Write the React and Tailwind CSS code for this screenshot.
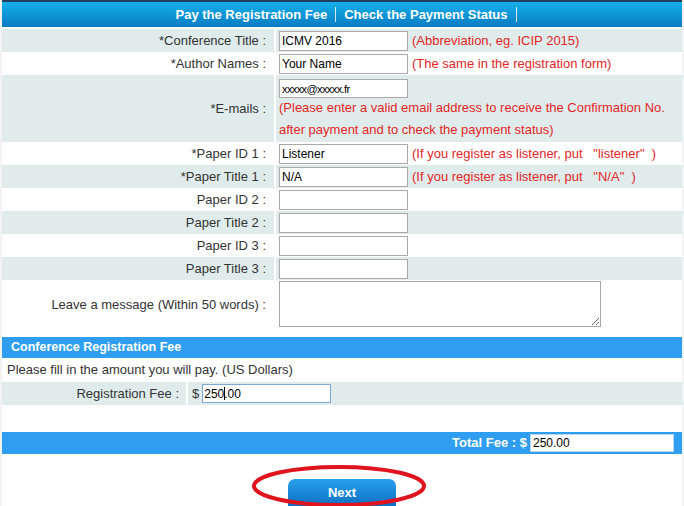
const font = "font-['Liberation_Sans',Arial,sans-serif]";

function Field({ value = "", w = "w-[129px]" }) {
  return (
    <input
      readOnly
      value={value}
      className={`${w} h-[20px] border border-[#a9a9a9] bg-white px-[2px] text-[12px] text-black outline-none`}
    />
  );
}

function Row({ label, shade, h = "h-[23px]", children }) {
  const bg = shade ? "bg-[#e0ecec]" : "bg-white";
  return (
    <div className={`flex ${h} gap-[2px]`}>
      <div className={`${bg} w-[272px] shrink-0 flex items-center justify-end pr-[8px] text-[13px] text-[#333]`}>
        {label}
      </div>
      <div className={`${bg} flex-1 flex items-center pl-[3px]`}>{children}</div>
    </div>
  );
}

function Hint({ children }) {
  return <span className="ml-[4px] text-[13px] text-[#e3261f] whitespace-pre">{children}</span>;
}

export default function App() {
  return (
    <div className={`${font} w-[684px] h-[506px] overflow-hidden bg-[#f3f3f3]`}>
      <div className="mx-[2px] h-full bg-white">
        {/* top strip + nav bar */}
        <div className="h-[2px] bg-[#243f5c]" />
        <div className="h-[25px] bg-gradient-to-b from-[#17b0ea] to-[#0a7bc3] flex items-center justify-center pl-[8px] text-[13px] font-bold text-white">
          <span>Pay the Registration Fee</span>
          <span className="mx-[8px] h-[15px] w-px bg-white/80" />
          <span>Check the Payment Status</span>
          <span className="ml-[8px] h-[15px] w-px bg-white/80" />
        </div>

        <div className="mt-[2px]">
          <Row label="*Conference Title :" shade>
            <Field value="ICMV 2016" />
            <Hint>(Abbreviation, eg. ICIP 2015)</Hint>
          </Row>
          <Row label="*Author Names :">
            <Field value="Your Name" />
            <Hint>(The same in the registration form)</Hint>
          </Row>
          <div className="flex h-[67px] gap-[2px]">
            <div className="bg-[#e0ecec] w-[272px] shrink-0 flex items-center justify-end pr-[8px] text-[13px] text-[#333]">
              *E-mails :
            </div>
            <div className="bg-[#e0ecec] flex-1 flex flex-col pl-[3px] pt-[4px]">
              <input
                readOnly
                value="xxxxx@xxxxx.fr"
                className="w-[129px] h-[19px] border border-[#a9a9a9] bg-white px-[2px] text-[11px] tracking-[-0.6px] text-black outline-none"
              />
              <p className="-mt-[1px] text-[13px] leading-[22px] text-[#e3261f]">
                (Please enter a valid email address to receive the Confirmation No.
                <br />
                after payment and to check the payment status)
              </p>
            </div>
          </div>
          <Row label="*Paper ID 1 :">
            <Field value="Listener" />
            <Hint>{'(If you register as listener, put   "listener"  )'}</Hint>
          </Row>
          <Row label="*Paper Title 1 :" shade>
            <Field value="N/A" />
            <Hint>{'(If you register as listener, put   "N/A"  )'}</Hint>
          </Row>
          <Row label="Paper ID 2 :">
            <Field />
          </Row>
          <Row label="Paper Title 2 :" shade>
            <Field />
          </Row>
          <Row label="Paper ID 3 :">
            <Field />
          </Row>
          <Row label="Paper Title 3 :" shade>
            <Field />
          </Row>
          <Row label="Leave a message (Within 50 words) :" h="h-[50px]">
            <textarea
              readOnly
              className="self-start mt-[1px] w-[322px] h-[46px] border border-[#a9a9a9] bg-white outline-none"
            />
          </Row>
        </div>

        {/* fee section */}
        <div className="mt-[7px] h-[21px] bg-[#2f9ef0] flex items-center pl-[9px] text-[12.5px] font-bold text-white">
          Conference Registration Fee
        </div>
        <div className="h-[24px] flex items-center pl-[5px] text-[13px] text-[#333]">
          Please fill in the amount you will pay. (US Dollars)
        </div>
        <div className="flex h-[23px] gap-[2px]">
          <div className="bg-[#e0ecec] w-[184px] shrink-0 flex items-center justify-end pr-[7px] text-[13px] text-[#333]">
            Registration Fee :
          </div>
          <div className="bg-[#e0ecec] flex-1 flex items-center pl-[4px] text-[13px] text-[#333]">
            <span className="mr-[3px]">$</span>
            <div className="relative">
              <input
                readOnly
                value="250.00"
                className="w-[129px] h-[19px] border border-[#7ea6d8] bg-white px-[1px] text-[12px] text-black outline-none"
              />
              <span className="absolute left-[22px] top-[3px] h-[13px] w-px bg-black" />
            </div>
          </div>
        </div>

        {/* total */}
        <div className="mt-[27px] h-[22px] bg-[#2f9ef0] flex items-center justify-end pr-[8px] text-[13px] font-bold text-white">
          <span className="mr-[3px]">Total Fee : $</span>
          <input
            readOnly
            value="250.00"
            className="w-[144px] h-[18px] border border-[#b9d7f2] bg-white px-[2px] text-[12px] font-normal text-black outline-none"
          />
        </div>

        {/* next button with red highlight */}
        <div className="relative mt-[25px] flex justify-center">
          <button className="w-[108px] h-[30px] rounded-t-[7px] bg-gradient-to-b from-[#2aa0ec] to-[#0a6cc0] pb-[3px] text-[13px] font-bold text-white">
            Next
          </button>
          <svg className="absolute left-[247px] top-[-14px]" width="180" height="46" viewBox="0 0 180 46">
            <ellipse cx="90" cy="21" rx="85" ry="19" fill="none" stroke="#e0141e" strokeWidth="4" />
          </svg>
        </div>
      </div>
    </div>
  );
}
